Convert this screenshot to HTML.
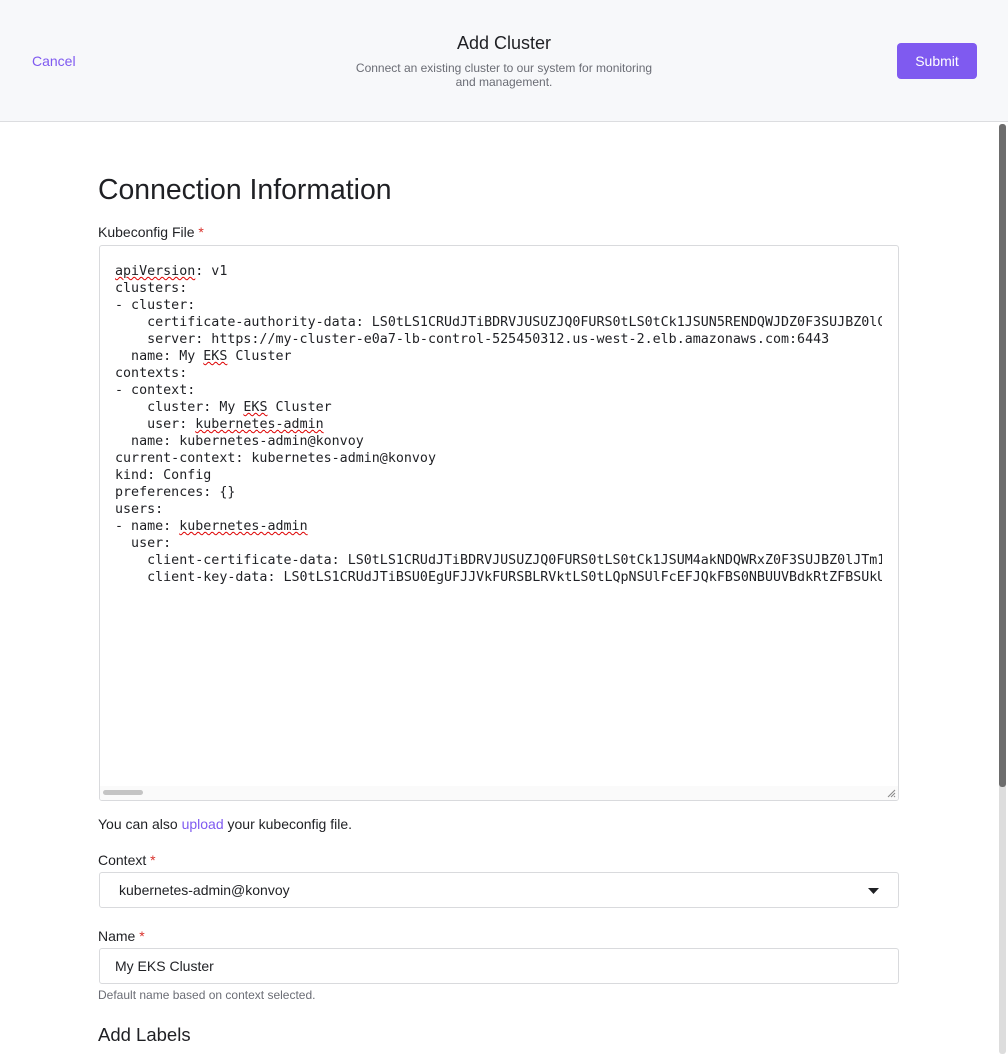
<!DOCTYPE html>
<html><head><style>
body{margin:0;width:1008px;height:1054px;overflow:hidden;background:#fff;font-family:"Liberation Sans",sans-serif;position:relative}
.hdr{position:absolute;left:0;top:0;width:1008px;height:121px;background:#f7f8fa;border-bottom:1px solid #dcdde0}
.cancel{position:absolute;left:32px;top:53px;font-size:14px;color:#7f5af0}
.title{position:absolute;left:0;width:1008px;top:33px;text-align:center;font-size:18px;color:#1f2024}
.sub{position:absolute;left:350px;width:308px;top:61px;text-align:center;font-size:12px;line-height:14px;color:#6b6d75}
.btn{position:absolute;left:897px;top:43px;width:80px;height:36px;background:#7f5af0;border-radius:4px;color:#fff;font-size:14px;line-height:36px;text-align:center}
h1{position:absolute;left:98px;top:174px;margin:0;font-weight:normal;font-size:28.4px;color:#1f2024}
.lbl{position:absolute;left:98px;font-size:14px;color:#1f2024}
.req{color:#d9312b}
.ta{position:absolute;left:99px;top:245px;width:798px;height:554px;border:1px solid #d9dadd;border-radius:3px;overflow:hidden}
pre{margin:0;position:absolute;left:15px;top:17px;width:767px;overflow:hidden;font-family:"DejaVu Sans Mono",monospace;font-size:13.33px;line-height:17px;color:#1f2024}
.sq{text-decoration:underline wavy #d00;text-decoration-thickness:1px}
.hs{position:absolute;left:0;bottom:0;width:798px;height:14px;background:#fafafa}
.hs i{position:absolute;left:3px;top:4px;width:40px;height:5px;border-radius:3px;background:#c4c4c4}
.inp{position:absolute;left:99px;width:798px;height:34px;border:1px solid #d9dadd;border-radius:3px;font-family:"Liberation Sans",sans-serif;font-size:14px;color:#1f2024;line-height:34px}
.sb{position:absolute;left:999px;top:124px;width:7px;height:930px;background:#ddd;border-radius:3px}
.sb i{position:absolute;left:0;top:0;width:7px;height:663px;background:#6d6d6d;border-radius:3px}
</style></head><body>
<div class="hdr">
<div class="cancel">Cancel</div>
<div class="title">Add Cluster</div>
<div class="sub">Connect an existing cluster to our system for monitoring and management.</div>
<div class="btn">Submit</div>
</div>
<h1>Connection Information</h1>
<div class="lbl" style="top:224px">Kubeconfig File <span class="req">*</span></div>
<div class="ta"><pre><span class="sq">apiVersion</span>: v1
clusters:
- cluster:
    certificate-authority-data: LS0tLS1CRUdJTiBDRVJUSUZJQ0FURS0tLS0tCk1JSUN5RENDQWJDZ0F3SUJBZ0lCQURBTkJna3Foa2lHOXcwQkFRc0ZBREFW
    server: https://my-cluster-e0a7-lb-control-525450312.us-west-2.elb.amazonaws.com:6443
  name: My <span class="sq">EKS</span> Cluster
contexts:
- context:
    cluster: My <span class="sq">EKS</span> Cluster
    user: <span class="sq">kubernetes-admin</span>
  name: kubernetes-admin@konvoy
current-context: kubernetes-admin@konvoy
kind: Config
preferences: {}
users:
- name: <span class="sq">kubernetes-admin</span>
  user:
    client-certificate-data: LS0tLS1CRUdJTiBDRVJUSUZJQ0FURS0tLS0tCk1JSUM4akNDQWRxZ0F3SUJBZ0lJTm1hbVNBR0tW
    client-key-data: LS0tLS1CRUdJTiBSU0EgUFJJVkFURSBLRVktLS0tLQpNSUlFcEFJQkFBS0NBUUVBdkRtZFBSUkUwbWlR</pre>
<div class="hs"><i></i></div>
<svg style="position:absolute;right:2px;bottom:2px" width="10" height="10"><path d="M9 2L2 9M9 5L5 9M9 8L8 9" stroke="#888" stroke-width="1"/></svg>
</div>
<div class="lbl" style="top:816px">You can also <span style="color:#7f5af0">upload</span> your kubeconfig file.</div>
<div class="lbl" style="top:852px">Context <span class="req">*</span></div>
<div class="inp" style="top:872px"><span style="margin-left:19px">kubernetes-admin@konvoy</span>
<svg style="position:absolute;left:768px;top:15px" width="11" height="6"><path d="M0 0H11L5.5 6Z" fill="#1f2024"/></svg></div>
<div class="lbl" style="top:928px">Name <span class="req">*</span></div>
<div class="inp" style="top:948px"><span style="margin-left:15px">My EKS Cluster</span></div>
<div class="lbl" style="top:988px;font-size:12px;color:#6b6d75">Default name based on context selected.</div>
<div class="lbl" style="top:1024px;font-size:18.5px">Add Labels</div>
<div class="sb"><i></i></div>
</body></html>
